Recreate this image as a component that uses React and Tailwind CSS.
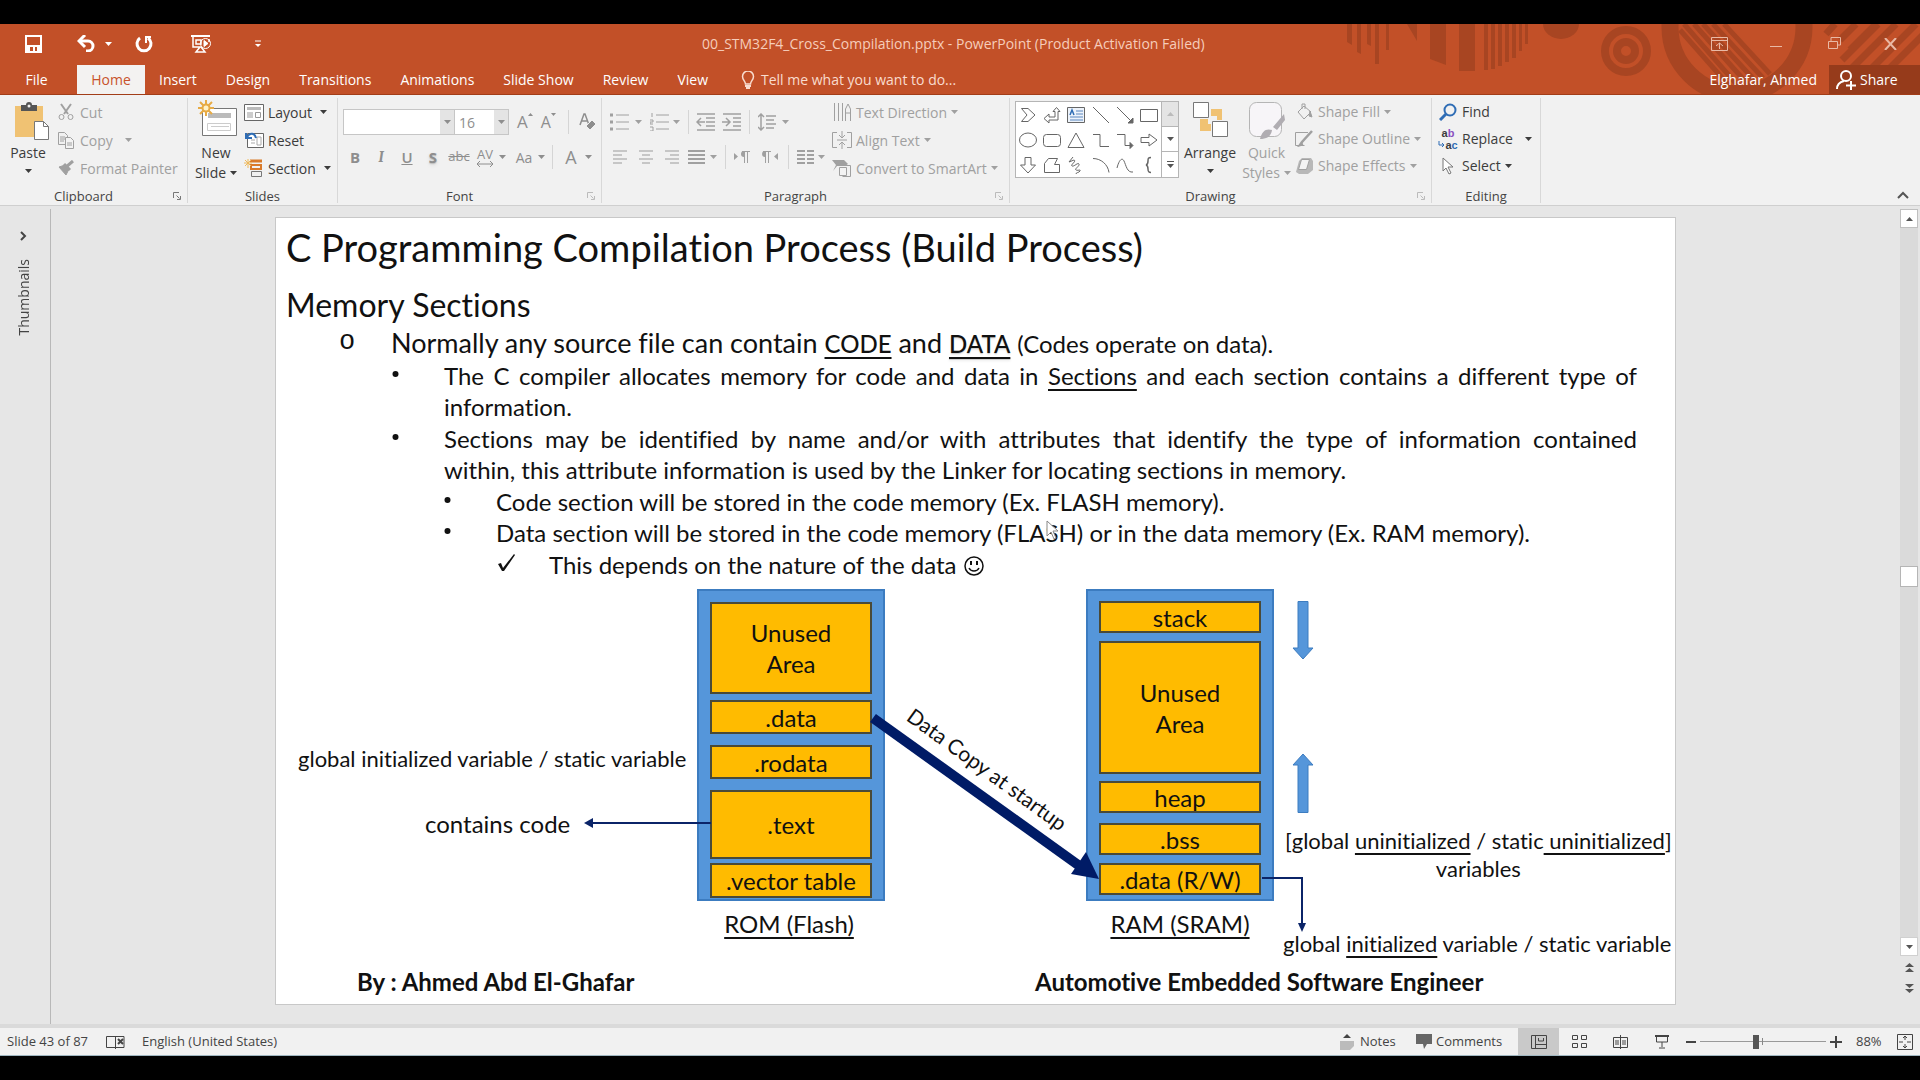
import React from "react";

const Icon = ({ w = 18, h = 18, sw = 1, className = "", children }) => (
  <svg
    aria-hidden="true"
    width={w}
    height={h}
    viewBox={`0 0 ${w} ${h}`}
    fill="none"
    stroke="currentColor"
    strokeWidth={sw}
    className={`shrink-0 ${className}`}
  >
    {children}
  </svg>
);

const Caret = ({ className = "" }) => (
  <Icon w={7} h={4} className={className}>
    <path d="M0 0h7L3.5 4z" fill="currentColor" stroke="none" />
  </Icon>
);

const Launcher = ({ className = "" }) => (
  <button aria-label="More options" className={`absolute right-[6px] bottom-[3px] ${className}`}>
    <Icon w={8} h={8}>
      <path d="M.5 6V.5H6M3.5 3.5l3 3M7.5 4v3.5H4" />
    </Icon>
  </button>
);

const Sep = () => <span className="h-6 w-px shrink-0 bg-[#d5d5d5]" />;

const Group = ({ name, launcher, className = "", children }) => (
  <section aria-label={name} className={`relative flex shrink-0 flex-col border-r border-[#d8d8d8] ${className}`}>
    <div className="flex h-[91px] items-start">{children}</div>
    <div className={`text-center text-[13px] leading-[14px] text-[#444] ${launcher ? "pr-5" : ""}`}>{name}</div>
    {launcher && <Launcher className={launcher} />}
  </section>
);

const Row = ({ icon, label, caret, height = "h-7" }) => (
  <button className={`flex items-center gap-1 whitespace-nowrap ${height}`}>
    <span className="flex w-5 justify-center">{icon}</span>
    <span>{label}</span>
    {caret && <Caret className={caret} />}
  </button>
);

const Tool = ({ label, className = "", children }) => (
  <button aria-label={label} className={`flex h-7 items-center justify-center ${className}`}>
    {children}
  </button>
);

/* ---------- title bar ---------- */

const TitleArt = () => (
  <svg aria-hidden="true" width="575" height="71" viewBox="1345 24 575 71" className="absolute top-0 right-0">
    <g fill="#a84522">
      <path d="M1347 24h5v21l-5-3zM1357 24h4v30l-4-2zM1367 24h4v22l-4-2zM1375 24h4v40h-4zM1386 24h3v26h-3zM1407 24h10v17zM1430 24h16v41l-16-6zM1459 24h16v47h-16z" />
      <path d="M1484 24h4v46h-4zM1491 24h4v45h-4zM1498 24h4v42h-4zM1505 24h4v38h-4zM1512 24h4v34h-4zM1519 24h3v27h-3zM1525 24h3v20h-3z" />
      <path d="M1543 24h36a18 15 0 0 1-36 0z" />
    </g>
    <g fill="none" stroke="#a84522">
      <circle cx="1626" cy="51" r="21" strokeWidth="8" />
      <circle cx="1626" cy="51" r="9" strokeWidth="8" />
      <circle cx="1737" cy="27" r="67" strokeWidth="17" />
      <path strokeWidth="5" d="M1680 30l58 66M1684 24l62 71M1694 24l58 65M1703 24l55 60M1713 24l50 54M1724 24l46 50" />
      <path strokeWidth="7" d="M1826 34l9-10M1840 40l16-16M1842 60l36-36M1850 70l46-46M1866 74l50-50M1880 78l54-54M1850 50l26-26" />
    </g>
  </svg>
);

const tabs = ["Insert", "Design", "Transitions", "Animations", "Slide Show", "Review", "View"];

const Header = () => (
  <header className="relative flex h-[71px] shrink-0 flex-col overflow-hidden border-b border-[#a23d18] bg-[#c25028] text-[#fde9e0]">
    <TitleArt />
    <div className="relative flex h-[41px] shrink-0 items-center pb-[2px]">
      <div className="flex w-[702px] items-center text-white">
        <button aria-label="Save" className="ml-[25px]">
          <Icon w={17} h={18} sw={2}>
            <path d="M1 1h15v16H1z" />
            <path d="M1 10h15v7H1z" fill="currentColor" stroke="none" />
            <path d="M5 12h3v4H5zM10 12h2v4h-2z" fill="#c25028" stroke="none" />
          </Icon>
        </button>
        <button aria-label="Undo" className="ml-[35px]">
          <Icon w={19} h={17} sw={3}>
            <path d="M3 6h8a5 5 0 0 1 0 10H9" />
            <path d="M8 0L2 6l6 6" />
          </Icon>
        </button>
        <button aria-label="Undo history" className="ml-[9px]">
          <Caret />
        </button>
        <button aria-label="Repeat" className="ml-[23px]">
          <Icon w={18} h={18} sw={3}>
            <path d="M5 3a7 7 0 1 0 8 0" />
            <path d="M16 2h-5v6" strokeWidth="2" />
          </Icon>
        </button>
        <button aria-label="Start from beginning" className="ml-[38px]">
          <Icon w={21} h={18} sw={1}>
            <path d="M0 1h19" strokeWidth="2" />
            <path d="M2 2v10h8M5 5h5v4H5zM9 12l-4 5h9l-4-5M18 4v3" strokeWidth="1.5" />
            <circle cx="14.500" cy="8.500" r="5" />
            <path d="M13 5.500v6l4-3z" fill="currentColor" />
          </Icon>
        </button>
        <button aria-label="Customize quick access toolbar" className="ml-[43px]">
          <Icon w={6} h={8}>
            <path d="M0 1h6" />
            <path d="M0 4h6L3 7z" fill="currentColor" stroke="none" />
          </Icon>
        </button>
      </div>
      <h1 className="flex-1 text-[14px] whitespace-nowrap text-[#f6cdbb]">
        00_STM32F4_Cross_Compilation.pptx - PowerPoint (Product Activation Failed)
      </h1>
      <div className="mr-[23px] flex items-center text-[#e9b9a5]">
        <button aria-label="Ribbon display options">
          <Icon w={17} h={14}>
            <path d="M.5.5h16v13H.5zM.5 3.500h16M8.500 12V6M5 9l3.500-3L12 9" />
          </Icon>
        </button>
        <button aria-label="Minimize" className="ml-[42px]">
          <Icon w={12} h={14}><path d="M0 9.500h12" /></Icon>
        </button>
        <button aria-label="Restore" className="ml-[46px]">
          <Icon w={13} h={13}>
            <path d="M.5 4.500h9v7h-9zM3 4V.5h9.500V8H10" />
          </Icon>
        </button>
        <button aria-label="Close" className="ml-[43px]">
          <Icon w={13} h={12} sw={2}><path d="M1 0l11 12M12 0L1 12" /></Icon>
        </button>
      </div>
    </div>
    <nav className="relative flex h-[30px] shrink-0 items-stretch text-[14px] leading-[30px] whitespace-nowrap text-white">
      <button className="flex w-[77px] justify-center pr-1">File</button>
      <button className="flex w-[68px] justify-center bg-[#f3f2f1] text-[#c8532c]">Home</button>
      {tabs.map((t) => (
        <button key={t} className="flex pr-[15px] pl-[14px]">{t}</button>
      ))}
      <button className="ml-[18px] flex gap-[6px] text-[#f9dccf]">
        <Icon w={14} h={18} className="mt-[6px]">
          <path d="M4.500 13c0-3-3-4-3-7.500a5.500 5.500 0 0 1 11 0C12.500 9 9.500 10 9.500 13z" strokeWidth="1.500" />
          <path d="M4 15h6M5 17h4" strokeWidth="2" />
        </Icon>
        Tell me what you want to do...
      </button>
      <span className="flex-1" />
      <span className="mr-3">Elghafar, Ahmed</span>
      <button className="flex w-[91px] gap-1 bg-[#963b1b] pl-[7px]">
        <Icon w={20} h={20} sw={2} className="mt-[5px]">
          <circle cx="10" cy="6" r="5" />
          <path d="M1 19c0-4 3-7 7-8M15 11v9M10 15.500h10" />
        </Icon>
        Share
      </button>
    </nav>
  </header>
);

/* ---------- ribbon ---------- */

const Clipboard = () => (
  <Group name="Clipboard" launcher="text-[#777]" className="w-[188px] text-[#a0a0a0]">
    <button className="flex w-14 flex-col items-center pt-1 text-[#3c3c3c]">
      <Icon w={36} h={38} className="ml-2">
        <path d="M1 4h28v31H1z" fill="#f0c273" stroke="none" />
        <path d="M7 3h5a3 3 0 0 1 6 0h5v6H7z" fill="#555" stroke="none" />
        <circle cx="15" cy="4" r="1.500" fill="#f3f3f3" stroke="none" />
        <path d="M20.500 19.500h9l5 5v13h-14z" fill="#fff" stroke="#777" />
        <path d="M29.500 19.500v5h5" stroke="#777" />
      </Icon>
      <span className="mt-[3px] leading-5">Paste</span>
      <Caret className="mt-[6px]" />
    </button>
    <div className="flex flex-col">
      <Row
        label="Cut"
        icon={
          <Icon w={16} h={18}>
            <path d="M3 1l7 10M13 1L6 11" strokeWidth="2" />
            <circle cx="3.500" cy="14" r="2.500" />
            <circle cx="12.500" cy="14" r="2.500" />
          </Icon>
        }
      />
      <Row
        label="Copy"
        caret="ml-2"
        icon={
          <Icon w={18} h={18}>
            <path d="M1.500 1.500h6l3 3v9h-9zM3 6h5M3 8h5M3 10h4" />
            <path d="M8.500 6.500h5l3 3v8h-8z" fill="#f3f3f3" />
            <path d="M10 12h5M10 14h5" />
          </Icon>
        }
      />
      <Row
        label="Format Painter"
        icon={
          <Icon w={17} h={16}>
            <path d="M1 7l6-2 4 4-3 6z" fill="currentColor" />
            <path d="M8 7l7-6M6 4l6 6" strokeWidth="3" />
          </Icon>
        }
      />
    </div>
  </Group>
);

const Slides = () => (
  <Group name="Slides" className="w-[150px] text-[#3c3c3c]">
    <button className="flex w-14 flex-col items-center pt-[2px]">
      <Icon w={40} h={38} className="ml-1">
        <path d="M4.500 8.500h34v27h-34z" fill="#fff" stroke="#777" />
        <path d="M10 13h23v5H10z" fill="#bbb" stroke="none" />
        <path d="M9.500 23.500h23v7h-23zM13 26.500h18" stroke="#ccc" />
        <g stroke="#e7ab45" strokeWidth="2">
          <path d="M8 0v16M0 8h16M2 2l12 12M14 2L2 14" />
          <circle cx="8" cy="8" r="3.500" fill="#fff2c8" />
        </g>
      </Icon>
      <span className="mt-[5px] leading-5">New</span>
      <span className="flex items-center gap-1 leading-5">Slide <Caret /></span>
    </button>
    <div className="flex flex-col">
      <Row
        label="Layout"
        caret="ml-1"
        icon={
          <Icon w={20} h={17}>
            <path d="M.5.5h19v16H.5z" fill="#fff" stroke="#666" />
            <path d="M3 3h14v3H3z" fill="#bbb" stroke="none" />
            <path d="M3 9h6M3 11h6M3 13h6M11.500 8.500h5v5h-5z" stroke="#999" />
          </Icon>
        }
      />
      <Row
        label="Reset"
        icon={
          <Icon w={20} h={18}>
            <path d="M3.500 2.500h16v14h-16z" fill="#fff" stroke="#666" />
            <path d="M7 9h4M7 12h4M13 6h4v8h-4z" stroke="#aaa" />
            <path d="M2 8V2M2 7h6M3 6c3-5 8-4 9 1" stroke="#2f6db5" strokeWidth="2" />
          </Icon>
        }
      />
      <Row
        label="Section"
        caret="ml-1"
        icon={
          <Icon w={20} h={18}>
            <path d="M6 2h12" stroke="#d97a29" strokeWidth="3" />
            <path d="M7 6h10v4H7z" stroke="#d97a29" strokeWidth="2" />
            <path d="M7.500 12.500h10v5h-10z" stroke="#777" />
            <path d="M4 0v9M0 4h8M1 1l6 6M7 1L1 7" stroke="#eeb95c" />
          </Icon>
        }
      />
    </div>
  </Group>
);

const FontGroup = () => (
  <Group name="Font" launcher="text-[#bbb]" className="w-[264px] text-[#8e8e8e]">
    <div className="flex flex-col pt-[10px] pl-[5px]">
      <div className="flex h-7 items-center">
        <label className="flex h-[26px] w-[112px] border border-[#c6c6c6] bg-white">
          <input aria-label="Font name" className="w-full min-w-0 bg-transparent px-1 outline-none" />
          <span className="flex w-[14px] shrink-0 items-center justify-center bg-[#e4e4e4]"><Caret /></span>
        </label>
        <label className="flex h-[26px] w-[54px] border border-l-0 border-[#c6c6c6] bg-white">
          <input aria-label="Font size" defaultValue="16" className="w-full min-w-0 bg-transparent px-1 outline-none" />
          <span className="flex w-[14px] shrink-0 items-center justify-center bg-[#e4e4e4]"><Caret /></span>
        </label>
        <Tool label="Increase font size" className="ml-2 text-[17px]">
          A<Icon w={5} h={3} className="mb-4"><path d="M0 3h5L2.500 0z" fill="currentColor" stroke="none" /></Icon>
        </Tool>
        <Tool label="Decrease font size" className="ml-2 text-[16px]">
          A<Icon w={5} h={3} className="mb-4"><path d="M0 0h5L2.500 3z" fill="currentColor" stroke="none" /></Icon>
        </Tool>
        <span className="w-3" />
        <Sep />
        <Tool label="Clear formatting" className="ml-[10px]">
          <Icon w={17} h={18}>
            <path d="M1 12L5 1h1l4 11M3 8h5" strokeWidth="1.500" />
            <path d="M7 13l6-6 4 4-6 6z" fill="currentColor" stroke="#f1f1f1" />
          </Icon>
        </Tool>
      </div>
      <div className="mt-[7px] flex h-7 items-center text-[15px]">
        <Tool label="Bold" className="w-6 font-bold">B</Tool>
        <Tool label="Italic" className="w-7 font-serif font-bold italic">I</Tool>
        <Tool label="Underline" className="w-6 font-semibold underline">U</Tool>
        <Tool label="Text shadow" className="w-7 font-bold text-shadow-md">S</Tool>
        <Tool label="Strikethrough" className="w-6 text-[13px] line-through">abc</Tool>
        <Tool label="Character spacing" className="w-7">
          <span className="flex flex-col items-center text-[13px] leading-[13px]">
            AV
            <Icon w={18} h={6}><path d="M1 3h16M4 0L1 3l3 3M14 0l3 3-3 3" /></Icon>
          </span>
        </Tool>
        <Caret />
        <Tool label="Change case" className="ml-[6px] w-6 text-[14px]">Aa</Tool>
        <Caret className="ml-[2px]" />
        <span className="w-[7px]" />
        <Sep />
        <Tool label="Font color" className="ml-2 w-5 text-[18px]">A</Tool>
        <Caret className="ml-1" />
      </div>
    </div>
  </Group>
);

const Lines = ({ w = 17, rows }) => (
  <Icon w={w} h={16} sw={2}>
    {rows.map(([a, b], i) => (
      <path key={i} d={`M${a} ${2 + i * 4}H${b}`} />
    ))}
  </Icon>
);

const Paragraph = () => (
  <Group name="Paragraph" launcher="text-[#bbb]" className="w-[408px] text-[#a0a0a0]">
    <div className="flex w-[230px] flex-col pt-[10px] pl-2">
      <div className="flex h-7 items-center">
        <Tool label="Bullets">
          <Icon w={19} h={18}>
            <path d="M6 2h13M6 9h13M6 16h13" />
            <path d="M0 2h3M0 9h3M0 16h3" strokeWidth="3" />
          </Icon>
        </Tool>
        <Caret className="ml-[6px]" />
        <Tool label="Numbering" className="ml-2">
          <Icon w={19} h={18}>
            <path d="M6 2h13M6 9h13M6 16h13M2 0v4M0 7h3v2H0v2h3M0 14h3v4H0" />
          </Icon>
        </Tool>
        <Caret className="mr-2 ml-1" />
        <Sep />
        <Tool label="Decrease indent" className="ml-[7px]">
          <Icon w={19} h={18}>
            <path d="M1 1h18M10 5h9M10 9h9M10 13h9M1 17h18M9 9H2M5 5L1 9l4 4" strokeWidth="1.500" />
          </Icon>
        </Tool>
        <Tool label="Increase indent" className="ml-[7px]">
          <Icon w={19} h={18}>
            <path d="M1 1h18M11 5h8M11 9h8M11 13h8M1 17h18M0 9h8M4 5l4 4-4 4" strokeWidth="1.500" />
          </Icon>
        </Tool>
        <span className="w-2" />
        <Sep />
        <Tool label="Line spacing" className="ml-2">
          <Icon w={18} h={18}>
            <path d="M8 3h10M8 7h8M8 11h10M8 15h8M3 1v16M0 4l3-3 3 3M0 14l3 3 3-3" strokeWidth="1.500" />
          </Icon>
        </Tool>
        <Caret className="ml-[6px]" />
      </div>
      <div className="mt-[7px] flex h-7 items-center">
        <Tool label="Align left" className="w-5 text-[#c6c6c6]"><Lines w={14} rows={[[0, 14], [0, 9], [0, 14], [0, 9]]} /></Tool>
        <Tool label="Center" className="w-8 text-[#c6c6c6]"><Lines w={14} rows={[[0, 14], [3, 11], [0, 14], [3, 11]]} /></Tool>
        <Tool label="Align right" className="w-5 text-[#c6c6c6]"><Lines w={14} rows={[[0, 14], [5, 14], [0, 14], [5, 14]]} /></Tool>
        <Tool label="Justify" className="w-7"><Lines rows={[[0, 17], [0, 17], [0, 17], [0, 17]]} /></Tool>
        <Caret className="mr-2" />
        <Sep />
        <Tool label="Left to right" className="w-8"><Icon w={16} h={12}><path d="M0 2v7l4-3.500zM10 6a3 3 0 0 1 0-6z" fill="currentColor" stroke="none" /><path d="M8 .5h8M10.500 0v12M13.500 0v12" /></Icon></Tool>
        <Tool label="Right to left" className="w-6"><Icon w={16} h={12}><path d="M16 2v7l-4-3.500zM3 6a3 3 0 0 1 0-6z" fill="currentColor" stroke="none" /><path d="M1 .5h8M3.500 0v12M6.500 0v12" /></Icon></Tool>
        <span className="w-[6px]" />
        <Sep />
        <Tool label="Columns" className="mr-1 ml-2">
          <Icon w={17} h={15} sw={2}>
            <path d="M0 1h8M0 5h8M0 9h8M0 13h8M10 1h7M10 5h7M10 9h7M10 13h7" />
          </Icon>
        </Tool>
        <Caret />
      </div>
    </div>
    <div className="flex flex-col">
      <Row
        label="Text Direction"
        caret="ml-0"
        icon={<Icon w={19} h={18}><path d="M1.500 0v18M5.500 0v18M9.500 0v18M12.500 18V6L15 1l2.500 5v12M12.500 10h5" /></Icon>}
      />
      <Row
        label="Align Text"
        caret="ml-0"
        icon={<Icon w={20} h={18}><path d="M5 1.500H.5v15H5M15 1.500h4.500v15H15M5 9h10M10 0v6M10 12v6M7 4l3 3 3-3M7 14l3-3 3 3" /></Icon>}
      />
      <Row
        label="Convert to SmartArt"
        caret="ml-0"
        icon={<Icon w={20} h={18}><path d="M0 1h12l4 4-3 2H5l-4 5 3-6z" fill="currentColor" stroke="none" /><path d="M7.500 8.500h7v8h-7z" fill="#f3f3f3" /><path d="M12.500 6.500h6v11h-8" /></Icon>}
      />
    </div>
  </Group>
);

const shapes = [
  ["Chevron", <path key="a" d="M2.500 2.500H9l7 6.500-7 6.500H2.500L8 9z" />],
  ["Bent arrow", <path key="a" d="M13.500 1.500L10 5.500h2V11H6V8l-5 4.500L6 17v-3h9V5.500h2z" />],
  ["Text box", <g key="a"><path d="M.5 1.500h17v15H.5z" fill="#edf3fb" /><path d="M9 5h7M9 8h7M3 11h13M3 14h13" stroke="#5b87bf" /><path d="M3 9l2-5 2 5" stroke="#2f6db5" strokeWidth="1.500" /></g>],
  ["Line", <path key="a" d="M1 1l16 16" />],
  ["Arrow", <path key="a" d="M1 1l15 15M17 12v5h-5z" fill="currentColor" />],
  ["Rectangle", <path key="a" d="M.5 3.500h17v12H.5z" />],
  ["Oval", <ellipse key="a" cx="9" cy="9" rx="8.500" ry="7" />],
  ["Rounded rectangle", <rect key="a" x=".5" y="3.500" width="17" height="12" rx="3" />],
  ["Triangle", <path key="a" d="M9 2l8 14.500H1z" />],
  ["Elbow connector", <path key="a" d="M1 3.500h7v12h9" />],
  ["Elbow arrow", <g key="a"><path d="M1 3.500h8v11h6" /><path d="M14 11.500l3 3-3 3z" fill="currentColor" /></g>],
  ["Right arrow", <path key="a" d="M1 6.500h8V3l8 6-8 6v-3.500H1z" />],
  ["Down arrow", <path key="a" d="M6 1.500h6V9h4.500L9 17 1.500 9H6z" />],
  ["Freeform", <path key="a" d="M1.500 16.500v-9l4-5h9l-3 6h5v8z" />],
  ["Scribble", <path key="a" d="M6 1L2 6l5-2c3 1-4 5-2 6s6-4 7-2-5 5-3 6 5-1 4 1-4 1-4 3" />],
  ["Arc", <path key="a" d="M1 2.500c8 0 15 6 16 14" />],
  ["Curve", <path key="a" d="M1 12C3 4 6 1 8 5s3 12 9 11" />],
  ["Left brace", <path key="a" strokeWidth="1.500" d="M11 1.500c-3 0-3 1-3 3.500s0 3.500-2 4c2 .5 2 2 2 4s0 3.500 3 3.500" />],
];

const Drawing = () => (
  <Group name="Drawing" launcher="text-[#bbb]" className="w-[422px] text-[#a0a0a0]">
    <div className="mt-[3px] ml-[5px] flex h-[77px] w-[164px] shrink-0 border border-[#b5b5b5] bg-white">
      <div className="grid flex-1 grid-cols-6 grid-rows-3 text-[#666]">
        {shapes.map(([n, d]) => (
          <button key={n} aria-label={n} className="flex items-center justify-center">
            <Icon>{d}</Icon>
          </button>
        ))}
      </div>
      <div className="grid w-[17px] grid-rows-3 divide-y divide-[#b5b5b5] border-l border-[#b5b5b5] text-[#555]">
        <button aria-label="Previous shapes" className="flex items-center justify-center bg-[#e4e4e4] text-[#bbb]"><Caret className="rotate-180" /></button>
        <button aria-label="Next shapes" className="flex items-center justify-center"><Caret /></button>
        <button aria-label="All shapes" className="flex flex-col items-center justify-center gap-[2px]">
          <span className="h-px w-[7px] bg-[#555]" />
          <Caret />
        </button>
      </div>
    </div>
    <button className="ml-[2px] flex w-[58px] flex-col items-center pt-1 text-[#3c3c3c]">
      <Icon w={37} h={36}>
        <path d="M19 7h11v11h-5v-4h-6zM8 17h8v5h3v7H8z" fill="#f0c273" stroke="none" />
        <path d="M1.500.5h15v15h-15zM20.500 19.500h15v15h-15z" fill="#fff" stroke="#777" />
      </Icon>
      <span className="mt-[5px] leading-5">Arrange</span>
      <Caret className="mt-[6px]" />
    </button>
    <button className="flex w-[55px] flex-col items-center pt-1">
      <Icon w={38} h={38}>
        <rect x="1.500" y=".5" width="32" height="34" rx="7" fill="#f7f5f8" stroke="#b5b5b5" />
        <path d="M12 37c2-8 6-11 12-9-1 7-6 9-12 9zM25 25l11-13 1 6-8 10z" fill="#b0adb2" stroke="none" />
      </Icon>
      <span className="mt-[3px] leading-5">Quick</span>
      <span className="flex items-center gap-1 leading-5">Styles <Caret /></span>
    </button>
    <div className="flex flex-col">
      <Row height="h-[27px]" label="Shape Fill" caret="ml-0" icon={<Icon w={18} h={18}><path d="M9 3l7 6-7 7-6-7zM7 6V1h3v5" /><path d="M15 8l2 6-3-1z" fill="currentColor" /></Icon>} />
      <Row height="h-[27px]" label="Shape Outline" caret="ml-0" icon={<Icon w={20} h={17}><path d="M14 2.500H1.500v13h9" /><path d="M18 1L8 12l-2 3 3-1" strokeWidth="2.500" /></Icon>} />
      <Row height="h-[27px]" label="Shape Effects" caret="ml-0" icon={<Icon w={18} h={18}><path d="M4 4l3-3h9l2 3v9l-5 4H4l-3-2z" fill="#b8b8b8" stroke="none" /><path d="M6.500 2.500h8l-3 10h-8z" fill="#f3f3f3" /></Icon>} />
    </div>
  </Group>
);

const Editing = () => (
  <Group name="Editing" className="w-[109px] text-[#3c3c3c]">
    <div className="flex flex-col pl-[6px]">
      <Row height="h-[27px]" label="Find" icon={<Icon w={18} h={18} sw={2}><circle cx="11" cy="7" r="5.500" stroke="#2f6db5" /><path d="M7 11l-6 6" stroke="#2f6db5" strokeWidth="3" /></Icon>} />
      <Row
        height="h-[27px]"
        label="Replace"
        caret="ml-2"
        icon={
          <span className="flex flex-col font-['Liberation_Sans'] text-[11px] leading-[12px] font-bold">
            <span>a<span className="text-[#8a4fc0]">b</span></span>
            <span className="flex items-center">
              <Icon w={7} h={8}><path d="M1 0v4h5M4 2l2 2-2 2" stroke="#2f6db5" /></Icon>
              a<span className="text-[#2f6db5]">c</span>
            </span>
          </span>
        }
      />
      <Row height="h-[27px]" label="Select" caret="ml-0" icon={<Icon w={12} h={18}><path d="M1 1v13l3-3 3 6 2-1-3-6h5z" fill="#fff" stroke="#777" /></Icon>} />
    </div>
  </Group>
);

const Ribbon = () => (
  <div className="flex h-[111px] shrink-0 border-b border-[#cfcfcf] bg-[#f1f1f1] pt-[3px] pb-[2px] text-[14px]">
    <Clipboard />
    <Slides />
    <FontGroup />
    <Paragraph />
    <Drawing />
    <Editing />
    <span className="flex-1" />
    <button aria-label="Collapse the ribbon" className="mr-[11px] self-end pb-1 text-[#555]">
      <Icon w={12} h={8} sw={2}><path d="M1 7l5-5 5 5" /></Icon>
    </button>
  </div>
);

/* ---------- slide ---------- */

const Block = ({ className, children }) => (
  <div className={`flex shrink-0 items-center justify-center border-2 border-[#4a4a38] bg-[#ffbb00] text-center ${className}`}>
    {children}
  </div>
);

const Diagram = () => (
  <div className="relative h-[386px] shrink-0 text-[24px] leading-[31px] whitespace-nowrap">
    <div className="absolute top-[9px] left-[421px] flex h-[312px] w-[188px] flex-col border-2 border-[#3c7cc0] bg-[#5596da] px-[11px] pt-[11px]">
      <Block className="h-[92px]">Unused<br />Area</Block>
      <Block className="mt-[6px] h-[34px]">.data</Block>
      <Block className="mt-[11px] h-[34px]">.rodata</Block>
      <Block className="mt-[11px] h-[69px]">.text</Block>
      <Block className="mt-1 h-[35px]">.vector table</Block>
    </div>
    <div className="absolute top-[9px] left-[810px] flex h-[312px] w-[188px] flex-col border-2 border-[#3c7cc0] bg-[#5596da] px-[11px] pt-[10px]">
      <Block className="h-[32px]">stack</Block>
      <Block className="mt-[8px] h-[133px]">Unused<br />Area</Block>
      <Block className="mt-[7px] h-[32px]">heap</Block>
      <Block className="mt-[10px] h-[32px]">.bss</Block>
      <Block className="mt-[8px] h-[32px]">.data (R/W)</Block>
    </div>
    <p className="absolute top-[328px] left-[419px] w-[188px] text-center underline underline-offset-4">ROM (Flash)</p>
    <p className="absolute top-[328px] left-[810px] w-[188px] text-center underline underline-offset-4">RAM (SRAM)</p>
    <p className="absolute top-[163px] left-[22px] text-[22px]">global initialized variable / static variable</p>
    <p className="absolute top-[228px] left-[149px]">contains code</p>
    <p className="absolute top-[247px] left-[1009px] text-center text-[22px] leading-[28px]">
      [global <u className="underline-offset-4">uninitialized</u> / static<u className="underline-offset-4"> uninitialized</u>]
      <br />
      variables
    </p>
    <p className="absolute top-[348px] left-[1007px] text-[22px]">
      global <u className="decoration-2 underline-offset-4">initialized</u> variable / static variable
    </p>
    <p className="absolute top-[173px] left-[616px] w-[190px] rotate-[36deg] text-center text-[21px]">Data Copy at startup</p>
    <svg aria-hidden="true" width="1400" height="388" viewBox="276 582 1400 388" className="pointer-events-none absolute top-0 left-0">
      <g fill="#5596da" stroke="#3c7cc0">
        <path d="M1298 603.500h10V650h5l-10 11-10-11h5z" />
        <path d="M1298 814.500h10V767h5l-10-11-10 11h5z" />
      </g>
      <path d="M873 720l208 149" stroke="#001b66" strokeWidth="10" />
      <path d="M1099 881l-28-5 15-22z" fill="#001b66" />
      <path d="M711 825H590" stroke="#0b2468" strokeWidth="2" />
      <path d="M584 825l9-5v10z" fill="#0b2468" />
      <path d="M1262 880h40v46" fill="none" stroke="#0b2468" strokeWidth="2" />
      <path d="M1302 934l-4-9h8z" fill="#0b2468" />
    </svg>
  </div>
);

const Dot = () => <Icon w={7} h={31}><circle cx="3.500" cy="14" r="3" fill="currentColor" stroke="none" /></Icon>;

const Bullet = ({ mark, indent, className = "", children }) => (
  <li className={`flex items-start ${indent} ${className}`}>
    <span aria-hidden="true" className="flex w-[52px] shrink-0">{mark}</span>
    <p className="min-w-0 flex-1">{children}</p>
  </li>
);

const Slide = () => (
  <article className="relative mx-auto flex w-full max-w-[1401px] flex-col self-start border border-[#c8c8c8] bg-white font-[Lato,Carlito,sans-serif] text-[#111] [font-variant-ligatures:none]">
    <h2 className="mt-[5px] pl-[10px] text-[38px] leading-[48px]">C Programming Compilation Process (Build Process)</h2>
    <h3 className="mt-3 pl-[10px] text-[32px] leading-[44px]">Memory Sections</h3>
    <ul className="mr-[38px] text-justify text-[24px] leading-[31px]">
      <Bullet
        mark={<span className="font-['Liberation_Mono']">o</span>}
        indent="pl-[63px]"
        className="h-[33px] text-[27px]"
      >
        Normally any source file can contain <u className="text-[24px] font-medium underline-offset-4">CODE</u> and{" "}
        <u className="text-[24px] font-medium underline-offset-4 text-shadow-sm">DATA</u>{" "}
        <span className="text-[24px]">(Codes operate on data).</span>
      </Bullet>
      <Bullet mark={<Dot />} indent="pl-[116px]">
        The C compiler allocates memory for code and data in <u className="underline-offset-4">Sections</u> and each
        section contains a different type of information.
      </Bullet>
      <Bullet mark={<Dot />} indent="pl-[116px]" className="mt-px">
        <span className="block [text-align-last:justify]">
          Sections may be identified by name and/or with attributes that identify the type of information contained
        </span>
        within, this attribute information is used by the Linker for locating sections in memory.
      </Bullet>
      <Bullet mark={<Dot />} indent="pl-[168px]" className="mt-px">
        Code section will be stored in the code memory (Ex. FLASH memory).
      </Bullet>
      <Bullet mark={<Dot />} indent="pl-[168px]">
        Data section will be stored in the code memory (FLASH) or in the data memory (Ex. RAM memory).
      </Bullet>
      <Bullet
        mark={<Icon w={19} h={19} className="mt-1"><path d="M1 11l3-1 2 5L17 1l1 1L7 18H5z" fill="currentColor" stroke="none" /></Icon>}
        indent="pl-[221px]"
        className="mt-px h-[31px]"
      >
        This depends on the nature of the data{" "}
        <Icon w={22} h={22} className="-mt-1 inline">
          <circle cx="11" cy="11" r="9" strokeWidth="1.500" />
          <path d="M8 6v4M14 6v4" strokeWidth="2" />
          <path d="M6 13c2 4 8 4 10 0" strokeWidth="1.500" />
        </Icon>
      </Bullet>
    </ul>
    <Diagram />
    <footer className="grid h-[38px] grid-cols-[678px_1fr] pl-[81px] text-[24px] leading-8 font-bold">
      <span>By : Ahmed Abd El-Ghafar</span>
      <span>Automotive Embedded Software Engineer</span>
    </footer>
    <Icon w={14} h={22} className="pointer-events-none absolute top-[302px] left-[770px]">
      <path d="M1 1v15l4-4 3 7 2-1-3-7h5z" fill="#fff" stroke="#888" />
    </Icon>
  </article>
);

const ScrollBar = () => (
  <aside aria-label="Scroll" className="mt-[3px] mr-[2px] flex w-[18px] shrink-0 flex-col items-center text-[#555]">
    <button aria-label="Scroll up" className="flex h-[19px] w-full items-center justify-center border border-[#c0c0c0] bg-white">
      <Caret className="rotate-180" />
    </button>
    <div className="flex w-full flex-1 flex-col bg-[#dadada]">
      <span className="flex-[338]" />
      <span className="h-[21px] w-full border border-[#b5b5b5] bg-white" />
      <span className="flex-[351]" />
    </div>
    <button aria-label="Scroll down" className="flex h-[19px] w-full items-center justify-center border border-[#d0d0d0] bg-white">
      <Caret />
    </button>
    <button aria-label="Previous slide" className="mt-1 flex h-4 items-center">
      <Icon w={9} h={10}><path d="M4.500 0L9 4H0zM4.500 5L9 9H0z" fill="currentColor" stroke="none" /></Icon>
    </button>
    <button aria-label="Next slide" className="mt-1 mb-[28px] flex h-4 items-center">
      <Icon w={9} h={10}><path d="M0 1h9L4.500 5zM0 6h9l-4.500 4z" fill="currentColor" stroke="none" /></Icon>
    </button>
  </aside>
);

const Workspace = () => (
  <main className="flex flex-1 border-b-4 border-[#dadada] bg-[#e6e6e6]">
    <aside className="mt-[3px] flex w-[51px] shrink-0 flex-col items-center border-r border-[#b8b8b8] pt-[22px] pr-1 text-[#444]">
      <button aria-label="Expand thumbnails">
        <Icon w={7} h={10} sw={2}><path d="M1 1l4 4-4 4" /></Icon>
      </button>
      <span className="mt-[18px] rotate-180 text-[14px] [writing-mode:vertical-rl]">Thumbnails</span>
    </aside>
    <div className="flex min-w-0 flex-1 pt-[11px]">
      <Slide />
    </div>
    <ScrollBar />
  </main>
);

/* ---------- status bar ---------- */

const StatusBar = () => (
  <footer className="flex h-7 shrink-0 items-center border-b border-[#9fb6c0] bg-[#f1f1f1] text-[13px] whitespace-nowrap text-[#444]">
    <span className="ml-[7px] w-[99px]">Slide 43 of 87</span>
    <button aria-label="Spelling" className="w-9">
      <Icon w={19} h={14}>
        <path d="M9.500 1.500h-9v11h9zM9.500 1.500h8.500v11H9.500M9.500 1v13" />
        <path d="M12 4l5 5M17 4l-5 5" strokeWidth="2" />
      </Icon>
    </button>
    <button>English (United States)</button>
    <span className="flex-1" />
    <button className="flex w-[76px] items-center gap-[6px]">
      <Icon w={14} h={16}>
        <path d="M7 0l4 4H3z" fill="currentColor" stroke="none" />
        <path d="M0 7h14v5l-4 4H0z" fill="#bbb" stroke="none" />
      </Icon>
      Notes
    </button>
    <button className="flex w-[102px] items-center gap-1">
      <Icon w={16} h={15}><path d="M0 0h16v10h-5l-3 5-1-5H0z" fill="#666" stroke="none" /></Icon>
      Comments
    </button>
    <button aria-label="Normal view" className="flex h-full w-[41px] items-center justify-center bg-[#c9c9c9]">
      <Icon w={16} h={14}><path d="M.5.5h15v13H.5zM4.500 0v14M4.500 9.500h11M7.500 3v3h5V3" /></Icon>
    </button>
    <button aria-label="Slide sorter" className="flex w-[41px] justify-center">
      <Icon w={15} h={13}><path d="M.5.5h5v4h-5zM9.500.5h5v4h-5zM.5 8.500h5v4h-5zM9.500 8.500h5v4h-5z" /></Icon>
    </button>
    <button aria-label="Reading view" className="flex w-[41px] justify-center">
      <Icon w={15} h={14}><path d="M7.500 2.500h-7v10h7zM7.500 2.500h7v10h-7zM7.500 0v14M3 5v5M5 5v5M10 5v5M12 5v5" /></Icon>
    </button>
    <button aria-label="Slide show" className="flex w-[41px] justify-center">
      <Icon w={14} h={14}><path d="M0 1h14" strokeWidth="2" /><path d="M1.500 2v5h11V2M7 7v5M4 13h6" /></Icon>
    </button>
    <button aria-label="Zoom out" className="ml-1">
      <Icon w={10} h={10} sw={2}><path d="M0 5h10" /></Icon>
    </button>
    <label className="relative ml-1 flex h-5 w-[126px] items-center">
      <input aria-label="Zoom" type="range" min="10" max="400" defaultValue="88" className="absolute inset-0 w-full opacity-0" />
      <span className="h-px w-full bg-[#999]" />
      <span className="pointer-events-none absolute left-[53px] h-[14px] w-[6px] bg-[#555]" />
      <span className="pointer-events-none absolute left-[62px] h-[7px] w-px bg-[#888]" />
    </label>
    <button aria-label="Zoom in" className="ml-1">
      <Icon w={12} h={12} sw={2}><path d="M0 6h12M6 0v12" /></Icon>
    </button>
    <span className="ml-[14px] w-[41px]">88%</span>
    <button aria-label="Fit slide to window" className="mr-[7px]">
      <Icon w={16} h={16}><path d="M.5.5h15v15H.5zM8 2v4M8 10v4M2 8h4M10 8h4M6 4l2-2 2 2M6 12l2 2 2-2" /></Icon>
    </button>
  </footer>
);

export default function App() {
  return (
    <div className="flex min-h-screen flex-col bg-black py-6 font-['Open_Sans','Noto_Sans',sans-serif]">
      <Header />
      <Ribbon />
      <Workspace />
      <StatusBar />
    </div>
  );
}
